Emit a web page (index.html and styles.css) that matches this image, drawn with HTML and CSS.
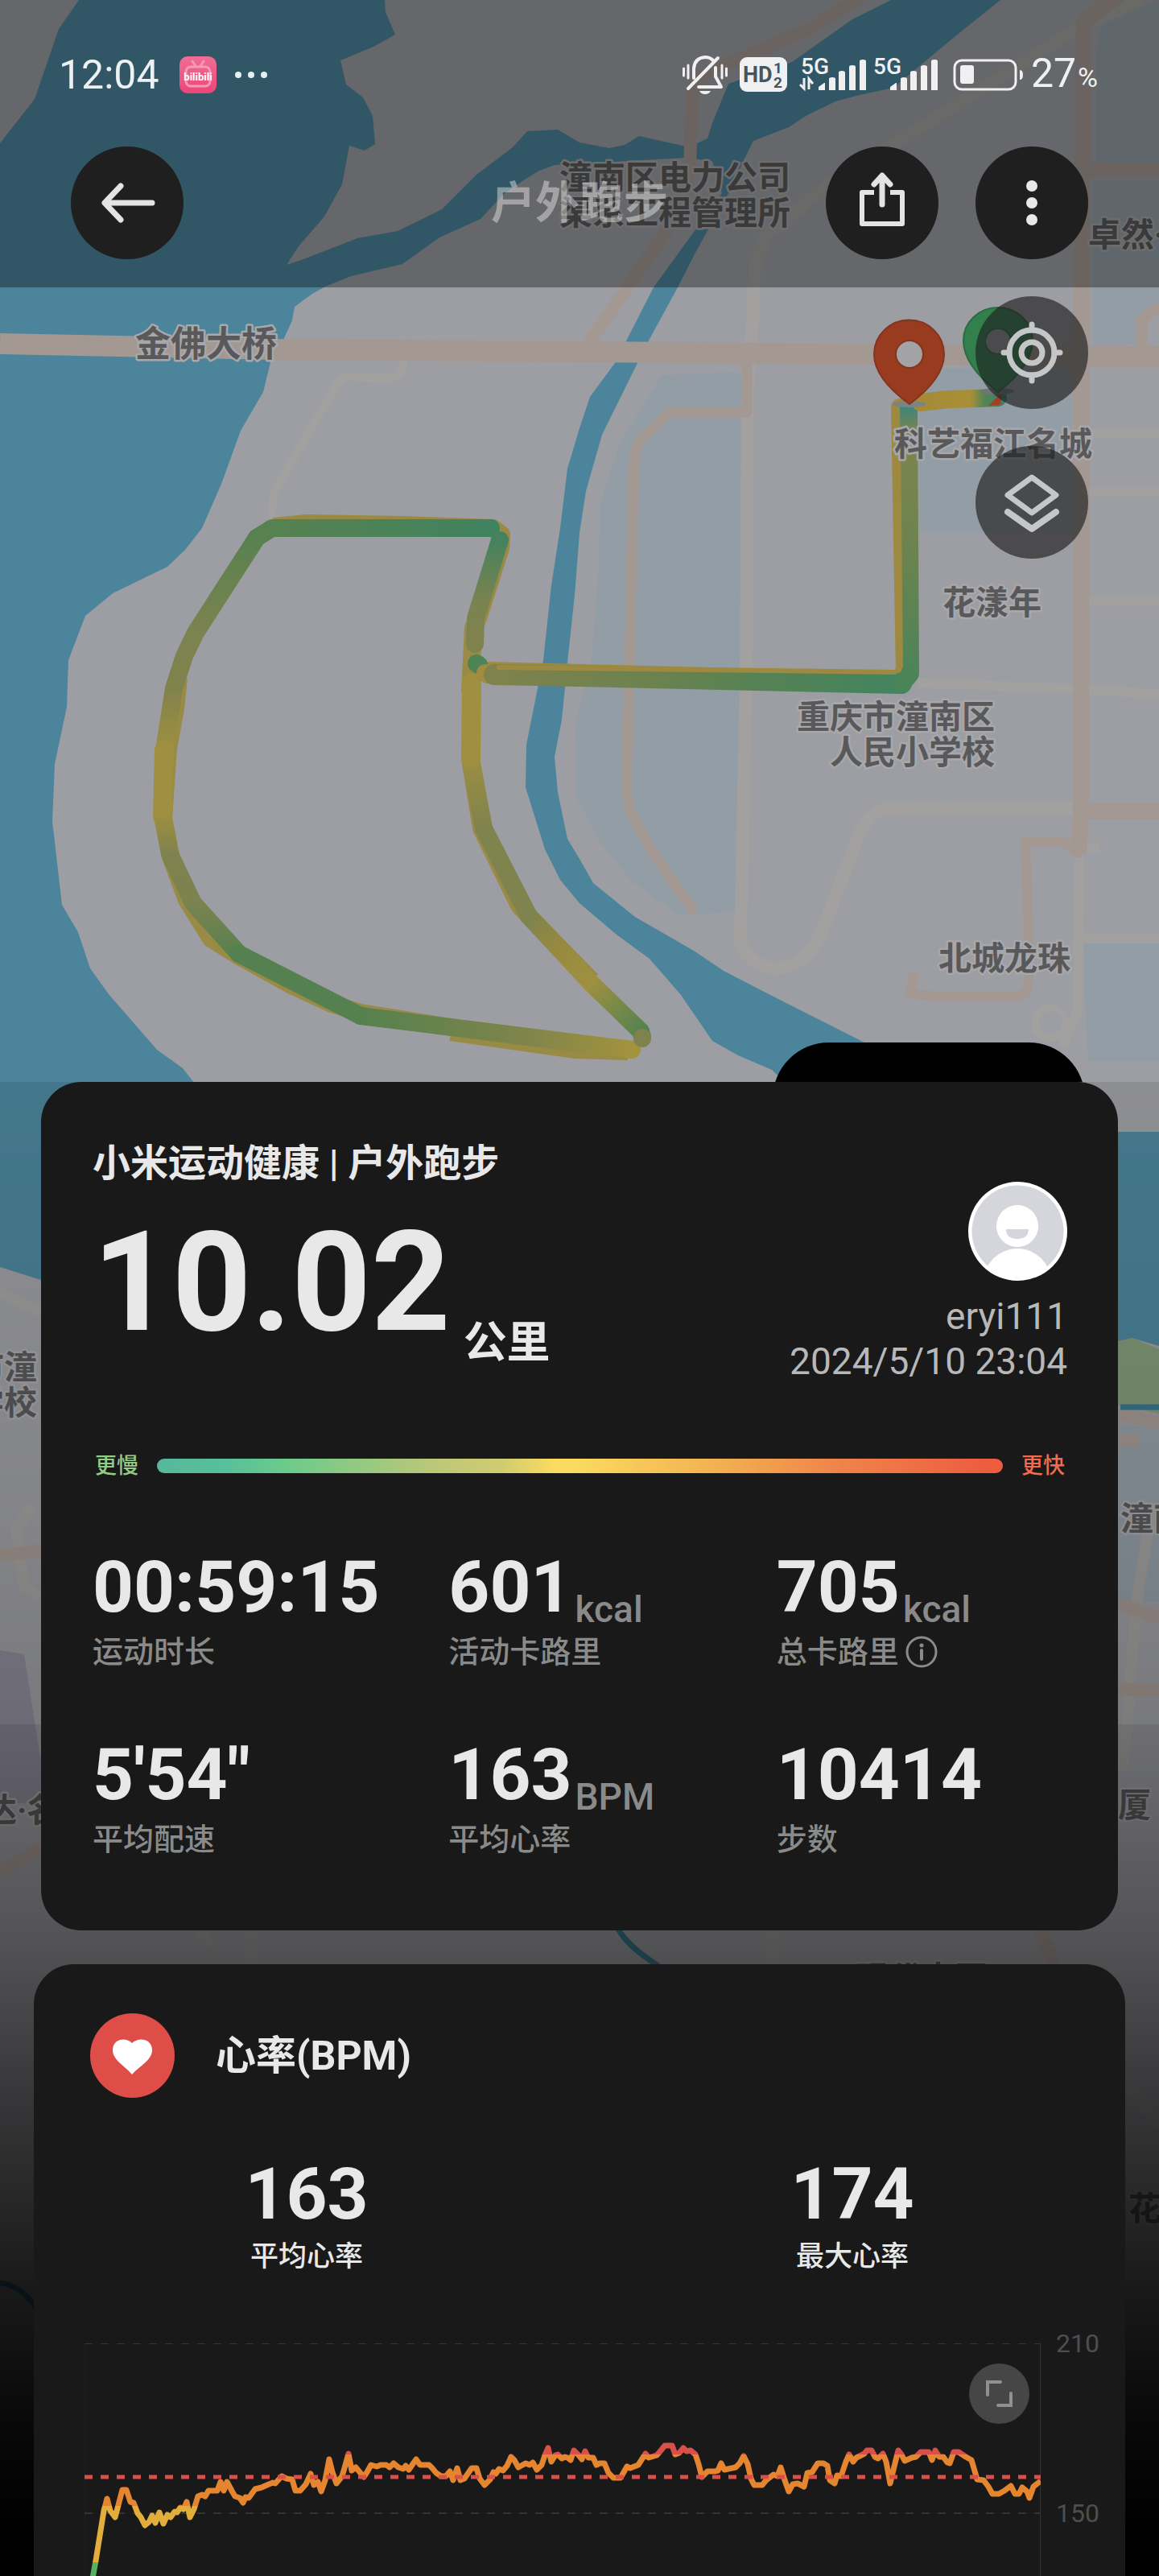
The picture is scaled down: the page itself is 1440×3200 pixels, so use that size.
FILE: index.html
```html
<!DOCTYPE html>
<html lang="zh-CN">
<head>
<meta charset="utf-8">
<meta name="viewport" content="width=device-width, initial-scale=1">
<title>户外跑步</title>
<link rel="stylesheet" href="styles.css">
</head>
<body>
<div class="screen">

<svg class="map" viewBox="0 0 1440 3200" preserveAspectRatio="xMidYMin slice" aria-hidden="true">
  <defs>
    <linearGradient id="t1" gradientUnits="userSpaceOnUse" x1="610" y1="0" x2="330" y2="0"><stop offset="0" stop-color="#40835f"/><stop offset="1" stop-color="#588150"/></linearGradient>
    <linearGradient id="t2" gradientUnits="userSpaceOnUse" x1="0" y1="668" x2="0" y2="932"><stop offset="0" stop-color="#588150"/><stop offset=".45" stop-color="#7c834f"/><stop offset=".7" stop-color="#80824d"/><stop offset="1" stop-color="#9f8f40"/></linearGradient>
    <linearGradient id="t3" gradientUnits="userSpaceOnUse" x1="0" y1="1010" x2="0" y2="1185"><stop offset="0" stop-color="#9f8f40"/><stop offset=".3" stop-color="#7f824e"/><stop offset=".65" stop-color="#7a834f"/><stop offset="1" stop-color="#588150"/></linearGradient>
    <linearGradient id="t4" gradientUnits="userSpaceOnUse" x1="448" y1="0" x2="789" y2="0"><stop offset="0" stop-color="#55814f"/><stop offset=".6" stop-color="#7f844b"/><stop offset="1" stop-color="#a4933c"/></linearGradient>
    <linearGradient id="t5" gradientUnits="userSpaceOnUse" x1="796" y1="1282" x2="660" y2="1140"><stop offset="0" stop-color="#55834f"/><stop offset=".45" stop-color="#9f9040"/><stop offset=".75" stop-color="#98893f"/><stop offset="1" stop-color="#7f834e"/></linearGradient>
    <linearGradient id="t6" gradientUnits="userSpaceOnUse" x1="0" y1="1030" x2="0" y2="930"><stop offset="0" stop-color="#7f834e"/><stop offset="1" stop-color="#9f8f40"/></linearGradient>
    <linearGradient id="t7" gradientUnits="userSpaceOnUse" x1="0" y1="800" x2="0" y2="670"><stop offset="0" stop-color="#80824d"/><stop offset=".4" stop-color="#7a834f"/><stop offset="1" stop-color="#45825d"/></linearGradient>
    <linearGradient id="t8" gradientUnits="userSpaceOnUse" x1="609" y1="0" x2="1124" y2="0"><stop offset="0" stop-color="#80824d"/><stop offset=".4" stop-color="#6b824f"/><stop offset=".65" stop-color="#558254"/><stop offset="1" stop-color="#42845f"/></linearGradient>
    <linearGradient id="t9" gradientUnits="userSpaceOnUse" x1="0" y1="840" x2="0" y2="505"><stop offset="0" stop-color="#4b8458"/><stop offset=".5" stop-color="#6e834f"/><stop offset=".9" stop-color="#7d844d"/><stop offset="1" stop-color="#3f857b"/></linearGradient>
    <linearGradient id="t10" gradientUnits="userSpaceOnUse" x1="1140" y1="0" x2="1250" y2="0"><stop offset="0" stop-color="#a58a36"/><stop offset=".6" stop-color="#a98f36"/><stop offset=".75" stop-color="#578453"/><stop offset="1" stop-color="#3a7f74"/></linearGradient>
  </defs>
  <rect width="1440" height="3200" fill="#9d9ea3"/>

  <g fill="#939da6">
    <path d="M823 466 915 462 929 480 920 1132 844 1137 784 1094 743 1042 716 990 715 900 735 820 744 700 746 625 770 550Z"/>
    <path d="M1142 458H1332V661H1142Z"/>
    <path d="M1362 80Q1362 28 1382 22L1440 0V202H1362ZM1358 224H1440V385L1415 398V428H1358Z"/>
    <path d="M1345 1172H1440V1318H1352Z"/>
    <path d="M1389 1772H1440V1990H1389Z"/>
  </g>

  <g fill="#4c849b">
    <path d="M98 0H478L479 15 491 43 464 58 423 75 430 105 451 121 463 144 466 179 453 187 434 181 425 229 403 269 371 306 356 329 377 322 444 296 494 287 549 260 592 217 637 183 655 163 693 161 720 177 757 184 776 180 794 169 848 181 866 178 879 172 885 153 905 104 984 77 1025 48 1059 24 1107 0H1243L1187 45 1110 109 1068 118 1038 126 1003 143 980 158 936 175 925 197 905 240 865 312 842 357 806 423 792 451 748 540 728 610 720 662 714 739 705 823 698 894 689 940 693 984 705 1042 720 1067 737 1097 789 1139 862 1181 899 1206 963 1239 1074 1295 1389 1406H1440V1672L1406 1662 1389 1667 1330 1640 1010 1380 959 1329 917 1311 885 1293 846 1236 807 1191 766 1161 720 1122 696 1093 677 1055 653 978 654 925 667 860 675 820 685 727 696 656 705 582 720 532 733 493 764 451 812 357 897 240 885 200 850 196 689 205 670 212 652 223 627 240 597 272 546 295 500 328 436 343 404 356 388 365 366 381 363 398 353 420 337 446 327 487 299 535 275 601 251 656 230 683 208 704 140 737 106 765 85 820 83 878 68 949 65 1020 77 1124 97 1158 112 1203 135 1235 195 1304 227 1327 241 1345 300 1460 300 1660 51 1590 0 1574V178L43 123 73 36Z"/>
  </g>

  <g fill="none" stroke="#a2a1a0" stroke-width="16" stroke-linejoin="round">
    <path d="M1420 0 1344 32 1101 185 1032 227 950 295 938 330 935 400 929 475 927 842 920 1171 Q930 1198 963 1203 Q1005 1200 1023 1152L1068 1035Q1080 1008 1101 1005L1333 1004"/>
    <path stroke-width="12" d="M1140 848 1335 856 1440 862M1352 538H1440M1352 611H1440M1352 747H1440M1345 1165H1440M1345 1053H1366M1341 1065 1339 1255 1320 1300"/>
    <path stroke-width="10" d="M502 446 497 465Q492 470 480 470L432 468Q424 468 418 478L340 612 337 649"/>
    <circle cx="1305" cy="1271" r="19" stroke-width="9"/>
    <path stroke-width="14" d="M0 1605 51 1630M40 1870 20 1900 30 1970 50 1985M1430 1880 1412 1990 1400 2148 1394 2200M312 2398V2440M250 2398 262 2420M960 2398V2440M1400 2590 1440 2640"/>
  </g>
  <path fill="#8d8a98" d="M0 2050 30 2055 51 2190V2240H0Z"/>
  <g fill="none" stroke="#a49893" stroke-width="20" stroke-linejoin="round">
    <path stroke-width="16" d="M1072-5 1005 36 917 74Q868 88 860 113L857 210 848 250 826 290 731 427"/>
    <path stroke-width="26" d="M0 427 340 434 720 437 1440 443"/>
    <path d="M1392-8 1347 27 1344 250 1343 438V1007L1340 1061M1345 211H1440M1343 1008H1440"/>
    <path stroke-width="14" d="M1418 438V398L1440 380"/>
    <path stroke-width="13" stroke-linecap="round" d="M928 450V512H832L796 546Q787 560 787 588L779 974Q780 1000 784 1010L812 1061 860 1129"/>
    <path stroke-width="12" stroke-linecap="round" d="M1338 1060 1322 1045H1274L1278 1160V1222Q1276 1238 1262 1238H1165L1130 1234 1135 1212"/>
    <path stroke-width="16" d="M1385 1755 1440 1768M1380 1790H1416M0 1932Q30 1930 51 1925M1389 1992 1440 2010M1389 2099H1440M0 2325 51 2295M1292 2398 1310 2440"/>
  </g>
  <path fill="#829a78" d="M1380 1668 1406 1662 1440 1676V1756L1380 1744Z"/>
  <g fill="none" stroke="#38768e" stroke-width="7"><path d="M1392 1748H1440M768 2396Q780 2418 818 2442M0 2836Q25 2838 46 2868"/></g>

  <g fill="none" stroke-width="22" stroke-linejoin="round" stroke-linecap="round">
    <path stroke="#998a45" stroke-linecap="butt" d="M340 654 382 650 500 652 612 656 623 664 622 681 594 768 588 780 584 860M222 842 218 880 209 930 203 1016M203 1016 213 1067 232 1118 262 1166 297 1188 360 1223 412 1247 448 1258 560 1276 640 1290M560 1282 715 1304 780 1306M584 942 598 1029 645 1125 657 1138 735 1218"/>
    <path stroke="#9d8a40" d="M602 833 1117 846 1124 838 1118 506"/>
    <path stroke="url(#t1)" d="M610 656H338L319 668"/>
    <path stroke="url(#t2)" d="M319 668 243 786 229 815 216 855 204 932 202 1014"/>
    <path stroke="#9f8f40" stroke-width="24" d="M204 932 202 1014"/>
    <path stroke="url(#t3)" d="M202 1014 211 1061 240 1122 297 1185"/>
    <path stroke="#558150" d="M297 1185 448 1262"/>
    <path stroke="url(#t4)" d="M448 1262 720 1296 785 1304"/>
    <path stroke="url(#t5)" d="M798 1288 796 1281 735 1222 657 1138"/>
    <path stroke="#7f834e" d="M657 1138 601 1029"/>
    <path stroke="url(#t6)" d="M601 1029 585 942"/>
    <path stroke="#9f8f40" stroke-width="24" d="M585 942 586 848"/>
    <path stroke="#7f824d" d="M798 1290V1289"/>
    <path stroke="url(#t7)" d="M590 800 591 768 621 671"/>
    <path stroke="#4e8355" d="M592 824 595 826"/>
    <path stroke="#a08c3e" d="M603 836 606 838"/>
    <path stroke="url(#t8)" stroke-width="26" d="M614 838 720 840 1120 849"/>
    <path stroke="url(#t9)" d="M1122 848 1131 837 1129 506"/>
    <path stroke="url(#t10)" d="M1144 500 1178 496 1215 495 1240 494"/>
    <path stroke="#9d8a40" stroke-width="6" d="M620 829 1112 835 1119 828 1116 540"/>
    <path fill="#a53e24" stroke="none" d="M1228 504 1245 488 1243 503Z"/>
  </g>

  <ellipse cx="1239" cy="486" rx="21" ry="4" fill="#6f7578"/>
  <path fill="#33804d" stroke="#2a6b40" stroke-width="2" d="M1240 487Q1197 454 1197 423A43 41 0 0 1 1283 423Q1283 454 1240 487Z"/>
  <circle cx="1240" cy="424" r="16" fill="#9d9ea3" stroke="#2f6f45" stroke-width="2"/>
  <ellipse cx="1130" cy="502" rx="21" ry="4" fill="#7f8285"/>
  <path fill="#993b1f" stroke="#84351e" stroke-width="2" d="M1130 502Q1086 470 1086 440A43 42 0 0 1 1173 440Q1173 470 1130 502Z"/>
  <circle cx="1130" cy="440" r="17" fill="#a3a3a5" stroke="#84351e" stroke-width="2"/>

  <g class="place">
    <text x="695" y="235">潼南区电力公司</text>
    <text x="695" y="279">渠系工程管理所</text>
    <text x="1352" y="306">卓然·</text>
    <text class="place-lg" x="168" y="443">金佛大桥</text>
    <text x="1111" y="566">科艺福江名城</text>
    <text x="1171" y="763">花漾年</text>
    <text x="990" y="905">重庆市潼南区</text>
    <text x="1031" y="949">人民小学校</text>
    <text x="1166" y="1205">北城龙珠</text>
    <text x="-36" y="1713">市潼</text>
    <text x="-36" y="1757">学校</text>
    <text x="1392" y="1901">潼南</text>
    <text x="-20" y="2263">达·名</text>
    <text x="1389" y="2257">厦</text>
    <text x="1063" y="2472">现代中医</text>
    <text x="1402" y="2758">花</text>
  </g>
</svg>

<header class="top">
  <div class="status">
    <span class="clock">12:04</span>
    <svg class="app" width="46" height="46" viewBox="0 0 46 46" aria-hidden="true">
      <defs><linearGradient id="pk" x2="0" y2="1"><stop offset="0" stop-color="#f16d96"/><stop offset="1" stop-color="#ec4577"/></linearGradient></defs>
      <rect width="46" height="46" rx="10" fill="url(#pk)"/>
      <rect x="8" y="13" width="30" height="24" rx="6" fill="none" stroke="#f59ab6" stroke-width="3"/>
      <path d="M16 6 20 12M30 6 26 12" stroke="#f59ab6" stroke-width="3" stroke-linecap="round"/>
      <text x="23" y="30" text-anchor="middle" class="app-name">bilibili</text>
    </svg>
    <svg class="dots" width="42" height="10" viewBox="0 0 42 10" aria-hidden="true"><g fill="#e9f0f4"><circle cx="5" cy="5" r="4"/><circle cx="21" cy="5" r="4"/><circle cx="37" cy="5" r="4"/></g></svg>
    <span class="spacer"></span>
    <div class="tray">
      <svg width="56" height="48" viewBox="0 0 56 48" aria-hidden="true"><g fill="none" stroke="#f0f0f1" stroke-width="4" stroke-linecap="round" stroke-linejoin="round"><path d="M14 28V16Q15 3 28 2 34 2 38 6M41 15V26L48 39H20"/><path d="M7 41 44 3"/><path stroke-width="3" d="M1.500 16V25M7 12V28M49 12V28M54.500 16V25"/></g><path fill="#f0f0f1" d="M21 44H35Q33 48 28 48T21 44Z"/></svg>
      <svg width="59" height="48" viewBox="0 0 59 48" aria-hidden="true"><rect y="2" width="59" height="43" rx="9" fill="#f0f0f1"/><text class="hd" x="4" y="33">HD</text><text class="hd-sm" x="42" y="22">1</text><text class="hd-sm" x="42" y="40">2</text></svg>
      <svg class="sig-a" width="84" height="48" viewBox="0 0 84 48" aria-hidden="true"><text class="net" x="2" y="23">5G</text><g fill="#f0f0f1"><path d="M24 43V39L31 34H32V43ZM37 43V29Q37 27 41 27T45 29V43ZM49 43V21Q49 19 53 19T57 21V43ZM62 43V14Q62 12 66 12T70 14V43ZM75 43V7Q75 5 79 5T83 7V43Z"/></g><path d="M6 28V41L1 36M12 42V29L17 35" fill="none" stroke="#f0f0f1" stroke-width="3"/></svg>
      <svg class="sig-b" width="80" height="48" viewBox="0 0 80 48" aria-hidden="true"><text class="net" x="-1" y="23">5G</text><g fill="#f0f0f1"><path d="M20 43V39L27 34H28V43ZM33 43V29Q33 27 37 27T41 29V43ZM45 43V21Q45 19 49 19T53 21V43ZM58 43V14Q58 12 62 12T66 14V43ZM71 43V7Q71 5 75 5T79 7V43Z"/></g></svg>
      <svg class="bat" width="88" height="48" viewBox="0 0 88 48" aria-hidden="true"><rect x="2" y="6" width="76" height="36" rx="9" fill="none" stroke="#f0f0f1" stroke-width="3"/><rect x="9" y="12" width="17" height="23" rx="3" fill="#f0f0f1"/><path d="M83 18Q87 18 87 24T83 30Z" fill="#f0f0f1"/></svg>
      <span class="pct">27<small>%</small></span>
    </div>
  </div>
  <div class="bar">
    <button class="round" aria-label="返回"><svg viewBox="0 0 140 140"><path d="M62 49 42 70 62 91M43 70H101" fill="none" stroke="#e3e3e3" stroke-width="7" stroke-linecap="round" stroke-linejoin="round"/></svg></button>
    <h1>户外跑步</h1>
    <div class="actions">
      <button class="round" aria-label="分享"><svg viewBox="0 0 140 140"><g fill="none" stroke="#e3e3e3" stroke-width="6" stroke-linecap="round" stroke-linejoin="round"><path stroke-linecap="butt" d="M60 57H45V96H95V57H80"/><path stroke-width="7" d="M70 72V37M60 47 70 36 80 47"/></g></svg></button>
      <button class="round" aria-label="更多"><svg viewBox="0 0 140 140"><g fill="#e8e8e8"><circle cx="70" cy="49" r="7"/><circle cx="70" cy="70" r="7"/><circle cx="70" cy="91" r="7"/></g></svg></button>
    </div>
  </div>
</header>

<section class="hero">
  <div class="tools">
    <button class="round glass" aria-label="定位"><svg viewBox="0 0 140 140"><g fill="none" stroke="#c5c6c7" stroke-width="7" stroke-linecap="round"><circle cx="70" cy="70" r="28"/><circle cx="70" cy="70" r="13"/><path d="M70 35V42M70 98V105M35 70H42M98 70H105"/></g></svg></button>
    <button class="round glass" aria-label="图层"><svg viewBox="0 0 140 140"><g fill="none" stroke="#c5c6c7" stroke-width="7" stroke-linecap="round" stroke-linejoin="round"><path d="M70 39 100 61 70 83 40 61Z"/><path stroke-width="8" d="M40 82 70 103 100 82"/></g></svg></button>
  </div>
  <button class="pill">查看数据</button>
</section>

<main class="sheet">
  <section class="card summary">
    <div class="head">
      <div class="main-col">
        <h2>小米运动健康 | 户外跑步</h2>
        <p class="distance"><strong>10.02</strong><span>公里</span></p>
      </div>
      <div class="user">
        <svg width="123" height="123" viewBox="0 0 123 123" aria-hidden="true">
          <defs><clipPath id="av"><circle cx="61.500" cy="61.500" r="58"/></clipPath></defs>
          <circle cx="61.500" cy="61.500" r="61.500" fill="#fff"/>
          <circle cx="61.500" cy="61.500" r="57" fill="#d5d6dc"/>
          <g fill="#fff"><circle cx="61" cy="55" r="26"/><circle cx="61" cy="125" r="42" clip-path="url(#av)"/></g>
          <path d="M47 59H75Q75 71 61 71T47 59Z" fill="#d5d6dc"/>
        </svg>
        <p>eryi111</p>
        <p><time datetime="2024-05-10T23:04">2024/5/10 23:04</time></p>
      </div>
    </div>
    <div class="pace"><span class="slow">更慢</span><i></i><span class="fast">更快</span></div>
    <dl class="stats">
      <div><dd>00:59:15</dd><dt>运动时长</dt></div>
      <div><dd>601<small>kcal</small></dd><dt>活动卡路里</dt></div>
      <div><dd>705<small>kcal</small></dd><dt>总卡路里<svg width="40" height="40" viewBox="0 0 40 40" aria-hidden="true"><circle cx="20" cy="20" r="18" fill="none" stroke="#8a8a8a" stroke-width="3"/><path d="M20 18V29" stroke="#8a8a8a" stroke-width="4" stroke-linecap="round"/><circle cx="20" cy="12" r="2.500" fill="#8a8a8a"/></svg></dt></div>
      <div><dd>5'54"</dd><dt>平均配速</dt></div>
      <div><dd>163<small>BPM</small></dd><dt>平均心率</dt></div>
      <div><dd>10414</dd><dt>步数</dt></div>
    </dl>
  </section>

  <section class="card heart">
    <div class="title">
      <svg width="105" height="105" viewBox="0 0 105 105" aria-hidden="true"><circle cx="52.500" cy="52.500" r="52.500" fill="#de4d48"/><path fill="#fff" d="M52 37C45 29 28 31 28 46 28 58 44 66 52 76 61 66 77 58 77 46 77 31 60 29 52 37Z"/></svg>
      <h2>心率(BPM)</h2>
    </div>
    <dl class="pair">
      <div><dd>163</dd><dt>平均心率</dt></div>
      <div><dd>174</dd><dt>最大心率</dt></div>
    </dl>
    <div class="chart">
      <div class="plot">
        <svg viewBox="0 0 1188 289" role="img" aria-label="心率曲线">
          <defs><linearGradient id="hr" gradientUnits="userSpaceOnUse" x1="0" y1="0" x2="0" y2="289">
            <stop offset=".477" stop-color="#d94f49"/><stop offset=".477" stop-color="#e58530"/><stop offset=".7" stop-color="#e58530"/><stop offset=".7" stop-color="#e2ad3a"/><stop offset=".941" stop-color="#e2ad3a"/><stop offset=".941" stop-color="#55b25d"/></linearGradient></defs>
          <path d="M0 0V289" stroke="#272727" stroke-width="1"/>
          <path d="M1188 0V289" stroke="#333" stroke-width="2"/>
          <path d="M0 0H1188M0 211H1188" stroke="#333" stroke-width="2" stroke-dasharray="10 10"/>
          <polyline fill="none" stroke="url(#hr)" stroke-width="7" stroke-linejoin="round" points="10,292 14,270 19,239 24,208 28,193 32,208 38,216 42,201 47,182 52,182 57,197 61,198 66,211 70,216 75,226 80,222 84,214 88,223 93,210 98,224 103,213 107,216 112,209 115,210 119,204 123,206 127,197 131,216 136,206 141,190 146,188 150,190 154,183 165,183 169,172 173,183 177,172 184,185 187,190 193,192 197,198 200,191 204,192 212,181 220,179 229,175 234,173 237,174 245,165 251,168 258,169 262,183 268,183 275,175 281,162 285,176 290,172 294,184 299,170 304,144 308,160 313,174 320,165 323,155 328,137 332,158 337,154 342,160 347,166 351,160 356,151 363,153 368,151 375,151 379,154 384,149 390,154 396,156 399,152 403,157 412,144 417,151 428,151 432,155 437,161 443,165 449,165 454,159 458,170 463,155 467,170 472,168 481,155 487,155 491,168 497,176 504,169 508,160 511,162 515,156 520,158 525,152 530,141 534,145 539,154 548,149 553,151 557,148 562,157 568,151 572,139 576,130 580,147 585,139 588,138 593,143 597,141 600,142 604,145 608,133 614,139 618,144 622,134 626,142 632,142 636,151 640,149 646,149 651,161 657,167 666,167 674,153 678,155 688,151 697,137 701,142 711,139 717,132 721,127 730,127 734,138 739,136 744,130 748,134 753,133 759,138 763,150 767,166 774,159 783,159 787,158 791,149 795,157 809,154 814,149 819,140 824,150 828,168 832,176 842,176 847,170 856,163 861,165 865,154 870,170 875,184 880,175 886,174 894,178 898,161 904,160 911,149 918,149 923,152 926,170 932,174 935,164 940,165 946,147 950,138 955,147 959,142 969,137 972,133 978,133 982,141 986,143 992,137 996,147 1001,174 1006,153 1011,133 1015,138 1019,146 1028,142 1033,141 1039,135 1049,135 1053,145 1057,133 1062,141 1067,141 1072,148 1075,149 1080,135 1086,135 1095,141 1102,145 1105,155 1109,169 1117,170 1123,178 1128,187 1136,187 1143,183 1151,177 1156,187 1161,187 1165,179 1171,184 1174,192 1179,178 1184,174 1188,171"/>
          <path d="M0 166H1188" stroke="#d94f49" stroke-width="5" stroke-dasharray="10 10"/>
        </svg>
        <button class="expand" aria-label="全屏"><svg viewBox="0 0 75 75"><path d="M23 39V23H39M36 52H52V37" fill="none" stroke="#909090" stroke-width="4" stroke-linecap="round"/></svg></button>
      </div>
      <div class="axis"><span>210</span><span>150</span></div>
    </div>
  </section>
</main>
</div>
</body>
</html>
```
FILE: styles.css
```css
* { box-sizing: border-box; margin: 0; padding: 0; }

body {
  background: #000;
  color: #e8e8e8;
  font-family: Roboto, "Noto Sans CJK SC", sans-serif;
}

button { border: 0; font: inherit; color: inherit; cursor: pointer; }
svg { display: block; flex: none; }

.screen { position: relative; overflow: hidden; }

/* map backdrop */
.map { position: absolute; inset: 0; width: 100%; height: 100%; }
.place text {
  font-size: 41px;
  font-weight: 700;
  fill: #59595b;
  stroke: #a8a8aa;
  stroke-width: 5px;
  stroke-linejoin: round;
  paint-order: stroke;
}
.place .place-lg { font-size: 44px; }

/* header */
.top {
  position: relative;
  padding: 63px 0 35px;
  background: rgba(0, 0, 0, .35);
}
.status {
  display: flex;
  align-items: center;
  height: 60px;
  padding: 0 76px 0 73px;
  color: #eef1f3;
  font-size: 50px;
  line-height: 60px;
}
.app { margin-left: 25px; }
.dots { margin-left: 22px; }
.spacer { flex: 1; }
.tray { display: flex; align-items: center; }
.tray svg + svg { margin-left: 15px; }
.tray .sig-b { margin-left: 9px; }
.tray .bat { margin-left: 18px; }
.pct { margin-left: 9px; }
.pct small { margin-left: 2px; font-size: 34px; }
.app-name { font: 700 13px Roboto, sans-serif; fill: #fff; }
.net { font: 500 28px Roboto, sans-serif; fill: #f0f0f1; }
.hd { font: 700 27px Roboto, sans-serif; fill: #45545d; }
.hd-sm { font: 700 19px Roboto, sans-serif; fill: #45545d; }

.bar {
  display: grid;
  grid-template-columns: 1fr auto 1fr;
  align-items: center;
  margin-top: 59px;
  padding: 0 88px;
}
.bar h1 {
  font-size: 55px;
  font-weight: 700;
  line-height: 60px;
  color: rgba(255, 255, 255, .4);
}
.actions { display: flex; justify-content: flex-end; gap: 46px; }
.round {
  width: 140px;
  height: 140px;
  border-radius: 50%;
  background: #1f1f1f;
}
.round.glass { background: rgba(30, 30, 30, .65); }

/* visible map area */
.hero {
  position: relative;
  display: flex;
  flex-direction: column;
  justify-content: space-between;
  align-items: flex-end;
  height: 987px;
  padding: 11px 88px 0;
  overflow: hidden;
}
.tools { display: flex; flex-direction: column; gap: 46px; }
.pill {
  width: 388px;
  height: 140px;
  margin: 0 4px -91px 0;
  padding-left: 64px;
  border-radius: 70px;
  background: #000;
  color: #fff;
  font-size: 46px;
}

/* cards */
.sheet {
  position: relative;
  background: linear-gradient(rgba(0, 0, 0, .1), rgba(0, 0, 0, .16) 28%, rgba(0, 0, 0, .23) 43%, rgba(0, 0, 0, .3) 43%, rgba(0, 0, 0, .47) 57%, rgba(0, 0, 0, .67) 69%, rgba(0, 0, 0, .83) 80%, rgba(0, 0, 0, .94) 89%, #000 97%);
}
.card { background: #191919; border-radius: 50px; }
.summary { margin: 0 51px; padding: 71px 63px 83px 64px; }
.head { display: flex; justify-content: space-between; }
.summary h2 { font-size: 47px; font-weight: 700; line-height: 60px; }
.distance { display: flex; align-items: flex-end; gap: 16px; margin-top: 18px; }
.distance strong { font-size: 172px; font-weight: 700; line-height: 200px; }
.distance span { font-size: 54px; font-weight: 700; line-height: 48px; }
.user {
  display: flex;
  flex-direction: column;
  align-items: flex-end;
  margin-top: 53px;
  color: #b8b8b8;
  font-size: 46px;
  line-height: 56px;
}
.user svg { margin-bottom: 16px; }

.pace {
  display: flex;
  align-items: center;
  gap: 23px;
  margin-top: 84px;
  padding: 0 3px;
  font-size: 27px;
  font-weight: 500;
  line-height: 36px;
}
.pace i {
  flex: 1;
  height: 18px;
  border-radius: 9px;
  background: linear-gradient(90deg, #55b99c, #57bf9b 8%, #6acb8b 15%, #b9c779 32%, #d2cc70 41%, #fbdb60 47%, #fad95f 50%, #f2af50 67%, #f0854a 80%, #ed5c40 98%);
}
.slow { color: #92cc85; }
.fast { color: #ef6c4e; }

.stats {
  display: grid;
  grid-template-columns: 442fr 407fr 361fr;
  row-gap: 73px;
  margin-top: 83px;
}
.stats dd, .pair dd {
  display: flex;
  align-items: flex-end;
  font-size: 89px;
  font-weight: 700;
  line-height: 100px;
}
.stats small {
  margin-left: 4px;
  color: #8a8a8a;
  font-size: 46px;
  font-weight: 500;
  line-height: 46px;
}
.stats dt {
  display: flex;
  align-items: center;
  gap: 8px;
  color: #8a8a8a;
  font-size: 38px;
  font-weight: 500;
  line-height: 60px;
}
.stats > div, .pair > div { display: flex; flex-direction: column; }

.heart {
  margin: 42px 42px 0;
  padding: 61px 0 0 63px;
  border-radius: 50px 50px 0 0;
}
.title { display: flex; align-items: center; gap: 51px; padding-left: 7px; }
.title h2 { font-size: 50px; font-weight: 700; line-height: 60px; }
.pair {
  display: grid;
  grid-template-columns: 1fr 1fr;
  justify-items: center;
  margin: 70px 0 0 -63px;
}
.pair > div { align-items: center; }
.pair dt { font-size: 35px; font-weight: 500; line-height: 56px; }

.chart { display: flex; gap: 19px; margin-top: 79px; padding-right: 32px; }
.plot { position: relative; flex: 1; }
.plot > svg { width: 100%; }
.axis {
  display: flex;
  flex-direction: column;
  gap: 171px;
  width: 54px;
  margin-top: -20px;
  color: #4e4e4e;
  font-size: 32px;
  line-height: 40px;
}
.expand {
  position: absolute;
  top: 25px;
  right: 14px;
  width: 75px;
  height: 75px;
  border-radius: 50%;
  background: #464646;
}
```
